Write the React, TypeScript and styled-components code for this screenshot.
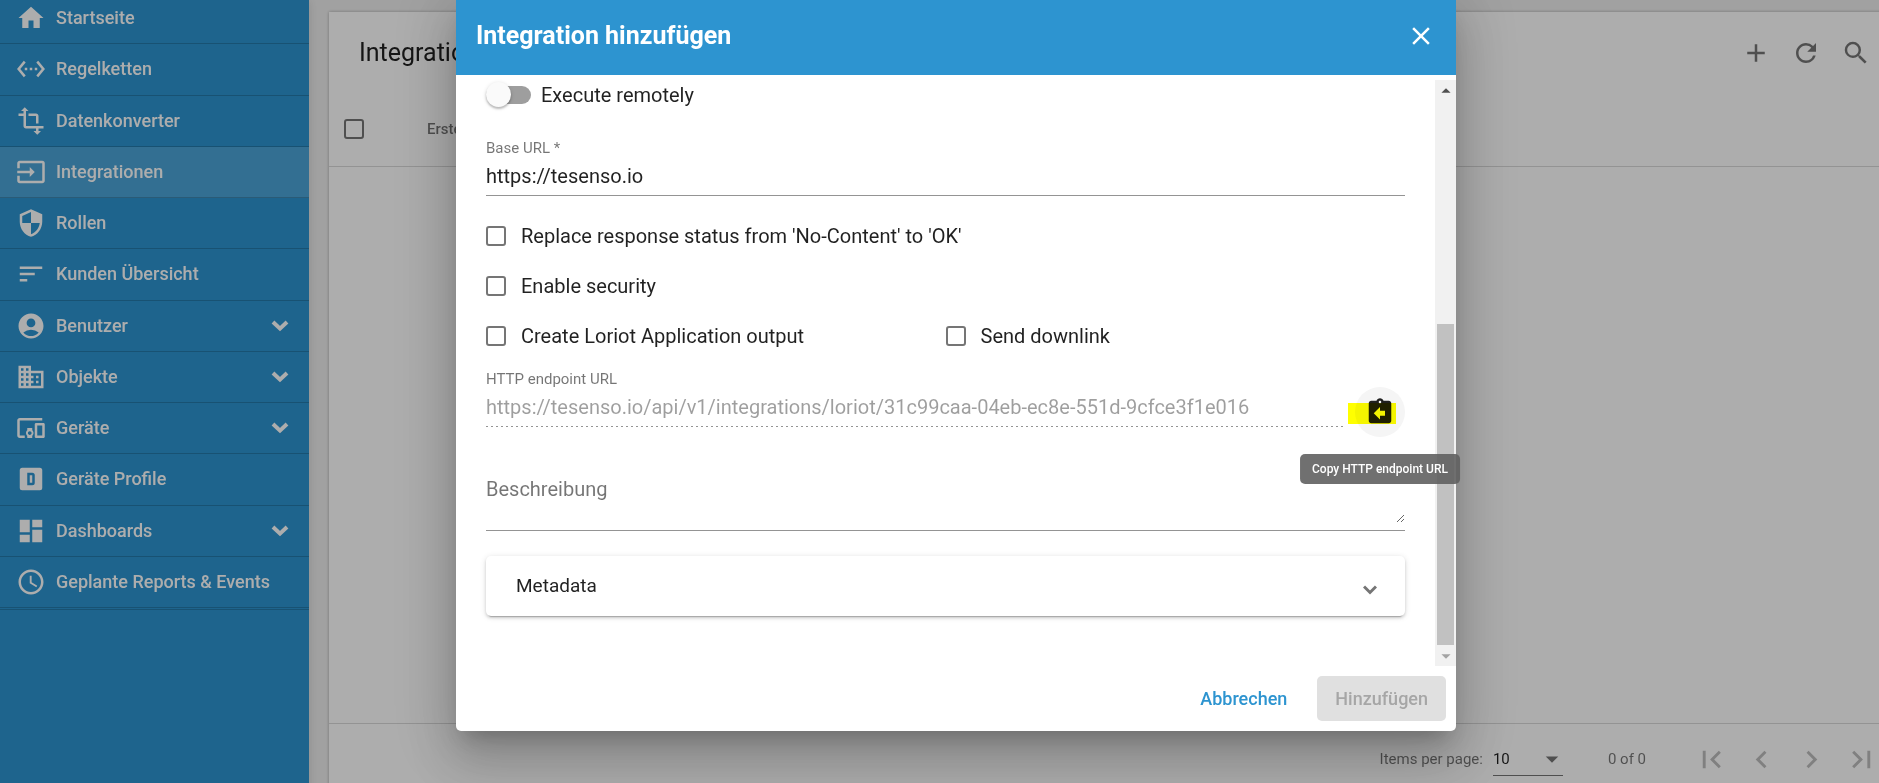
import React from "react";
import styled, { createGlobalStyle, css } from "styled-components";
import {
  MdAccountCircle,
  MdAdd,
  MdArrowDropDown,
  MdArrowDropUp,
  MdAssignmentReturn,
  MdChevronLeft,
  MdChevronRight,
  MdClose,
  MdDashboard,
  MdDevicesOther,
  MdDomain,
  MdFirstPage,
  MdHome,
  MdInput,
  MdLastPage,
  MdRefresh,
  MdSchedule,
  MdSearch,
  MdSecurity,
  MdSettingsEthernet,
  MdSort,
  MdTransform,
} from "react-icons/md";

const primary = "#2d94d0";
const textMain = "rgba(0, 0, 0, 0.87)";
const textMuted = "rgba(0, 0, 0, 0.54)";
const textDisabled = "rgba(0, 0, 0, 0.38)";

const GlobalStyle = createGlobalStyle`
  *, *::before, *::after { box-sizing: border-box; }
  body {
    margin: 0;
    overflow: hidden;
    font-family: Roboto, "Liberation Sans", sans-serif;
    font-size: 20px;
    line-height: 24px;
    color: ${textMain};
  }
  button, input, select, textarea { font: inherit; color: inherit; margin: 0; }
`;

const Viewport = styled.div`
  position: relative;
  height: 100vh;
  overflow: hidden;
`;

const Shell = styled.div`
  display: flex;
  width: calc(100% + 33px);
  min-height: calc(100vh + 11px);
  background: #eee;
`;

/* Side navigation */

const Sidebar = styled.nav`
  position: relative;
  flex: none;
  width: 309px;
  background: ${primary};
  box-shadow: 0 0 10px rgba(0, 0, 0, 0.12);
`;

const MenuList = styled.ul`
  display: grid;
  grid-auto-rows: 1fr;
  height: 617px;
  margin: -7px 0 0;
  padding: 0 0 1px;
  list-style: none;
  border-bottom: 1px solid rgba(0, 0, 0, 0.18);
`;

const MenuItem = styled.li`
  display: flex;
`;

const MenuLink = styled.a<{ $active?: boolean }>`
  display: flex;
  flex: 1;
  align-items: center;
  gap: 10px;
  padding: 0 20px 0 16px;
  border-bottom: 1px solid rgba(0, 0, 0, 0.18);
  background: ${(p) => (p.$active ? "rgba(255, 255, 255, 0.15)" : "transparent")};
  color: #fff;
  font-size: 18px;
  font-weight: 500;
  text-decoration: none;

  > svg:first-child {
    flex: none;
    width: 30px;
    height: 30px;
  }
`;

const MenuText = styled.span`
  flex: 1;
`;

const MenuChevron = () => (
  <svg width="18" height="12" viewBox="0 0 18 12" fill="none" stroke="currentColor" strokeWidth="4" aria-hidden="true">
    <path d="M2 2l7 6.6L16 2" />
  </svg>
);

const AlphaDBox = () => (
  <svg viewBox="0 0 24 24" fill="currentColor" aria-hidden="true">
    <path d="M9,7V17H13A2,2 0 0,0 15,15V9A2,2 0 0,0 13,7H9M11,9H13V15H11V9M5,3H19A2,2 0 0,1 21,5V19A2,2 0 0,1 19,21H5A2,2 0 0,1 3,19V5A2,2 0 0,1 5,3Z" />
  </svg>
);

const menu = [
  { label: "Startseite", icon: <MdHome /> },
  { label: "Regelketten", icon: <MdSettingsEthernet /> },
  { label: "Datenkonverter", icon: <MdTransform /> },
  { label: "Integrationen", icon: <MdInput />, active: true },
  { label: "Rollen", icon: <MdSecurity /> },
  { label: "Kunden Übersicht", icon: <MdSort /> },
  { label: "Benutzer", icon: <MdAccountCircle />, expandable: true },
  { label: "Objekte", icon: <MdDomain />, expandable: true },
  { label: "Geräte", icon: <MdDevicesOther />, expandable: true },
  { label: "Geräte Profile", icon: <AlphaDBox /> },
  { label: "Dashboards", icon: <MdDashboard />, expandable: true },
  { label: "Geplante Reports & Events", icon: <MdSchedule /> },
];

/* Table page behind the dialog */

const Main = styled.main`
  display: flex;
  flex: 1;
  padding: 12px 20px 0;
`;

const Card = styled.section`
  display: flex;
  flex: 1;
  flex-direction: column;
  background: #fff;
  box-shadow: 0 0 3px rgba(0, 0, 0, 0.3);
`;

const CardHeader = styled.header`
  display: flex;
  align-items: center;
  justify-content: space-between;
  height: 80px;
  padding: 2px 11px 0 30px;
`;

const CardTitle = styled.h1`
  margin: 0;
  font-size: 25px;
  font-weight: 400;
`;

const ButtonGroup = styled.div`
  display: flex;
`;

const IconButton = styled.button<{ $size?: number; $color?: string }>`
  display: flex;
  align-items: center;
  justify-content: center;
  width: 50px;
  height: 50px;
  padding: 0;
  border: 0;
  border-radius: 50%;
  background: transparent;
  color: ${(p) => p.$color ?? textMuted};

  svg {
    width: ${(p) => p.$size ?? 30}px;
    height: ${(p) => p.$size ?? 30}px;
  }
`;

const Table = styled.table`
  width: 100%;
  border-spacing: 0;
`;

const HeadCell = styled.th<{ $width?: number }>`
  width: ${(p) => (p.$width ? `${p.$width}px` : "auto")};
  height: 75px;
  padding: 0 0 0 15px;
  border-bottom: 1px solid rgba(0, 0, 0, 0.15);
  color: ${textMuted};
  font-size: 15px;
  font-weight: 500;
  text-align: left;
`;

const Paginator = styled.footer`
  display: flex;
  align-items: center;
  justify-content: flex-end;
  height: 71px;
  margin-top: auto;
  padding-right: 6px;
  border-top: 1px solid rgba(0, 0, 0, 0.15);
  color: ${textMuted};
  font-size: 15px;
`;

const PageSizeLabel = styled.label`
  margin-right: 10px;
`;

const PageSize = styled.span`
  display: flex;
  align-items: center;
  width: 70px;
  margin: 5px 45px 0 0;
  padding-bottom: 4px;
  border-bottom: 1px solid rgba(0, 0, 0, 0.54);

  svg {
    flex: none;
    width: 30px;
    height: 30px;
    margin: -3px -4px -3px -26px;
    pointer-events: none;
  }
`;

const PageSizeSelect = styled.select`
  width: 100%;
  padding: 0;
  border: 0;
  appearance: none;
  background: transparent;
  color: ${textMain};
`;

const PageRange = styled.span`
  margin-right: 40px;
`;

/* Shared form controls */

const checkboxBase = css`
  flex: none;
  appearance: none;
`;

const CheckboxInput = styled.input`
  ${checkboxBase}
  display: block;
  width: 20px;
  height: 20px;
  border: 2px solid ${textMuted};
  border-radius: 3px;
`;

const CheckRow = styled.div`
  display: grid;
  grid-template-columns: 1fr 1fr;
  align-items: center;
  height: 50px;
`;

const CheckLabel = styled.label<{ $wide?: boolean }>`
  display: flex;
  grid-column: ${(p) => (p.$wide ? "1 / -1" : "auto")};
  align-items: center;
  gap: 15px;
`;

const Switch = styled.input`
  ${checkboxBase}
  position: relative;
  width: 45px;
  height: 18px;
  border-radius: 9px;
  background: rgba(0, 0, 0, 0.38);

  &::before {
    content: "";
    position: absolute;
    top: -4px;
    left: 0;
    width: 25px;
    height: 25px;
    border-radius: 50%;
    background: #fafafa;
    box-shadow: 0 2px 2px rgba(0, 0, 0, 0.2), 0 1px 4px rgba(0, 0, 0, 0.14);
  }
`;

const SwitchLabel = styled.label`
  display: flex;
  align-items: center;
  gap: 10px;
  height: 30px;
`;

const Field = styled.div<{ $dotted?: boolean }>`
  display: flex;
  flex: 1;
  flex-direction: column;
  gap: 6px;
  padding-bottom: 7px;
  ${(p) =>
    p.$dotted
      ? css`
          padding-bottom: 8px;
          background: repeating-linear-gradient(90deg, rgba(0, 0, 0, 0.42) 0 2px, transparent 2px 5px) bottom / 100% 1px
            no-repeat;
        `
      : css`
          border-bottom: 1px solid rgba(0, 0, 0, 0.42);
        `}
`;

const FieldLabel = styled.label`
  color: ${textMuted};
  font-size: 15px;
  line-height: 20px;
`;

const TextInput = styled.input`
  width: 100%;
  height: 24px;
  padding: 0;
  border: 0;
  background: transparent;

  &:disabled {
    color: ${textDisabled};
  }
`;

const TextArea = styled.textarea`
  display: block;
  width: 100%;
  height: 46px;
  padding: 0;
  border: 0;
  background: transparent;
  overflow: auto;
  resize: vertical;

  &::placeholder {
    color: ${textMuted};
  }
`;

/* Dialog */

const Backdrop = styled.div`
  position: absolute;
  inset: 0 -33px 0 0;
  display: flex;
  align-items: flex-start;
  justify-content: center;
  background: rgba(0, 0, 0, 0.32);
`;

const Dialog = styled.div`
  width: 1000px;
  margin-top: -5px;
  border-radius: 5px;
  background: #fff;
  box-shadow: 0 14px 19px -9px rgba(0, 0, 0, 0.2), 0 30px 48px 4px rgba(0, 0, 0, 0.14),
    0 11px 58px 10px rgba(0, 0, 0, 0.12);
`;

const DialogHeader = styled.header`
  display: flex;
  align-items: center;
  justify-content: space-between;
  height: 80px;
  padding: 2px 10px 0 20px;
  background: ${primary};
  color: #fff;
`;

const DialogTitle = styled.h2`
  margin: 0;
  font-size: 25px;
  font-weight: 700;
`;

const DialogBody = styled.div`
  display: flex;
  margin-top: 5px;
`;

const DialogForm = styled.form`
  flex: 1;
  padding: 0 30px 50px;
`;

const FieldBlock = styled.div<{ $top: number }>`
  display: flex;
  align-items: flex-end;
  gap: 11px;
  margin-top: ${(p) => p.$top}px;
`;

const Checks = styled.div`
  margin-top: 15px;
`;

const CopyAnchor = styled.div`
  position: relative;
  margin-bottom: -10px;

  ${IconButton} {
    background: #f5f5f5;
    color: ${textMain};
  }
`;

const Highlight = styled.span`
  position: absolute;
  top: 16px;
  left: -7px;
  width: 48px;
  height: 21px;
  background: #ff0;
  mix-blend-mode: multiply;
  pointer-events: none;
`;

const Tooltip = styled.span`
  position: absolute;
  top: 67px;
  left: 50%;
  padding: 5px 12px;
  transform: translateX(-50%);
  border-radius: 5px;
  background: rgba(97, 97, 97, 0.9);
  color: #fff;
  font-size: 12px;
  font-weight: 500;
  line-height: 20px;
  white-space: nowrap;
`;

const Panel = styled.button`
  display: flex;
  align-items: center;
  justify-content: space-between;
  width: 100%;
  height: 60px;
  margin-top: 25px;
  padding: 0 28px 0 30px;
  border: 0;
  border-radius: 5px;
  background: #fff;
  box-shadow: 0 4px 1px -3px rgba(0, 0, 0, 0.2), 0 2px 3px rgba(0, 0, 0, 0.14), 0 1px 6px rgba(0, 0, 0, 0.12);
  font-size: 19px;

  svg {
    margin-top: 8px;
    color: ${textMuted};
  }
`;

const ScrollTrack = styled.div`
  display: flex;
  flex: none;
  flex-direction: column;
  align-items: center;
  width: 21px;
  background: #f1f1f1;
`;

const ScrollArrow = styled.span<{ $dim?: boolean }>`
  display: flex;
  align-items: center;
  justify-content: center;
  width: 21px;
  height: 21px;
  color: ${(p) => (p.$dim ? "#a3a3a3" : "#505050")};

  svg {
    flex: none;
    width: 22px;
    height: 22px;
  }
`;

const ScrollThumb = styled.div`
  width: 17px;
  height: 321px;
  margin-top: auto;
  background: #c1c1c1;
`;

const DialogActions = styled.footer`
  display: flex;
  justify-content: flex-end;
  gap: 12px;
  padding: 10px;
`;

const ActionButton = styled.button`
  height: 45px;
  padding: 0 18px;
  border: 0;
  border-radius: 5px;
  background: transparent;
  color: ${primary};
  font-size: 18px;
  font-weight: 500;

  &:disabled {
    background: #e0e0e0;
    color: #a6a6a6;
  }
`;

const Check = ({ label, wide }: { label: string; wide?: boolean }) => (
  <CheckLabel $wide={wide}>
    <CheckboxInput type="checkbox" />
    {label}
  </CheckLabel>
);

function SideNav() {
  return (
    <Sidebar>
      <MenuList>
        {menu.map((item) => (
          <MenuItem key={item.label}>
            <MenuLink href="#" $active={item.active}>
              {item.icon}
              <MenuText>{item.label}</MenuText>
              {item.expandable && <MenuChevron />}
            </MenuLink>
          </MenuItem>
        ))}
      </MenuList>
    </Sidebar>
  );
}

function IntegrationsTable() {
  const pagerColor = "rgba(0, 0, 0, 0.26)";
  return (
    <Main>
      <Card>
        <CardHeader>
          <CardTitle>Integrationen</CardTitle>
          <ButtonGroup>
            <IconButton aria-label="Hinzufügen"><MdAdd /></IconButton>
            <IconButton aria-label="Aktualisieren"><MdRefresh /></IconButton>
            <IconButton aria-label="Suchen"><MdSearch /></IconButton>
          </ButtonGroup>
        </CardHeader>
        <Table>
          <thead>
            <tr>
              <HeadCell $width={83}>
                <CheckboxInput type="checkbox" aria-label="Alle auswählen" />
              </HeadCell>
              <HeadCell>Erstellt</HeadCell>
            </tr>
          </thead>
        </Table>
        <Paginator>
          <PageSizeLabel htmlFor="page-size">Items per page:</PageSizeLabel>
          <PageSize>
            <PageSizeSelect id="page-size" defaultValue="10">
              <option>10</option>
              <option>20</option>
              <option>30</option>
            </PageSizeSelect>
            <MdArrowDropDown />
          </PageSize>
          <PageRange>0 of 0</PageRange>
          <ButtonGroup>
            <IconButton $size={35} $color={pagerColor} aria-label="First page"><MdFirstPage /></IconButton>
            <IconButton $size={35} $color={pagerColor} aria-label="Previous page"><MdChevronLeft /></IconButton>
            <IconButton $size={35} $color={pagerColor} aria-label="Next page"><MdChevronRight /></IconButton>
            <IconButton $size={35} $color={pagerColor} aria-label="Last page"><MdLastPage /></IconButton>
          </ButtonGroup>
        </Paginator>
      </Card>
    </Main>
  );
}

function AddIntegrationDialog() {
  return (
    <Backdrop>
      <Dialog role="dialog" aria-modal="true" aria-labelledby="dialog-title">
        <DialogHeader>
          <DialogTitle id="dialog-title">Integration hinzufügen</DialogTitle>
          <IconButton $color="#fff" aria-label="Schließen"><MdClose /></IconButton>
        </DialogHeader>
        <DialogBody>
          <DialogForm id="integration-form">
            <SwitchLabel>
              <Switch type="checkbox" role="switch" />
              Execute remotely
            </SwitchLabel>
            <FieldBlock $top={28}>
              <Field>
                <FieldLabel htmlFor="base-url">Base URL *</FieldLabel>
                <TextInput id="base-url" type="text" defaultValue="https://tesenso.io" />
              </Field>
            </FieldBlock>
            <Checks>
              <CheckRow>
                <Check wide label="Replace response status from 'No-Content' to 'OK'" />
              </CheckRow>
              <CheckRow>
                <Check wide label="Enable security" />
              </CheckRow>
              <CheckRow>
                <Check label="Create Loriot Application output" />
                <Check label="Send downlink" />
              </CheckRow>
            </Checks>
            <FieldBlock $top={8}>
              <Field $dotted>
                <FieldLabel htmlFor="endpoint-url">HTTP endpoint URL</FieldLabel>
                <TextInput
                  id="endpoint-url"
                  type="text"
                  disabled
                  defaultValue="https://tesenso.io/api/v1/integrations/loriot/31c99caa-04eb-ec8e-551d-9cfce3f1e016"
                />
              </Field>
              <CopyAnchor>
                <IconButton type="button" aria-labelledby="copy-tip">
                  <MdAssignmentReturn />
                </IconButton>
                <Highlight />
                <Tooltip id="copy-tip" role="tooltip">Copy HTTP endpoint URL</Tooltip>
              </CopyAnchor>
            </FieldBlock>
            <FieldBlock $top={50}>
              <Field>
                <TextArea aria-label="Beschreibung" placeholder="Beschreibung" />
              </Field>
            </FieldBlock>
            <Panel type="button" aria-expanded="false">
              Metadata
              <svg width="14" height="10" viewBox="0 0 14 10" fill="none" stroke="currentColor" strokeWidth="3" aria-hidden="true">
                <path d="M1 1.5l6 6 6-6" />
              </svg>
            </Panel>
          </DialogForm>
          <ScrollTrack aria-hidden="true">
            <ScrollArrow><MdArrowDropUp /></ScrollArrow>
            <ScrollThumb />
            <ScrollArrow $dim><MdArrowDropDown /></ScrollArrow>
          </ScrollTrack>
        </DialogBody>
        <DialogActions>
          <ActionButton type="button">Abbrechen</ActionButton>
          <ActionButton type="submit" form="integration-form" disabled>Hinzufügen</ActionButton>
        </DialogActions>
      </Dialog>
    </Backdrop>
  );
}

export default function App() {
  return (
    <Viewport>
      <GlobalStyle />
      <Shell>
        <SideNav />
        <IntegrationsTable />
      </Shell>
      <AddIntegrationDialog />
    </Viewport>
  );
}
